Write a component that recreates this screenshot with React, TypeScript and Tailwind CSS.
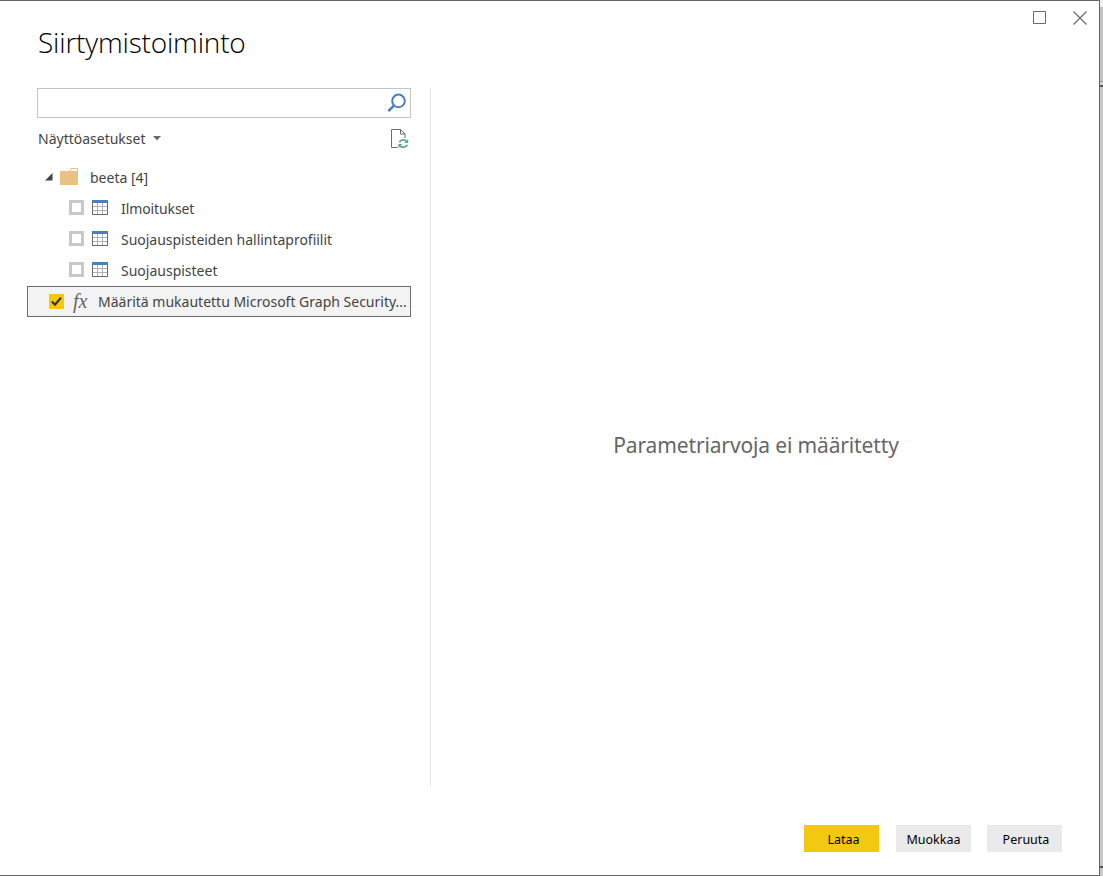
import React from "react";

function TableIcon() {
  return (
    <svg width="16" height="15" viewBox="0 0 16 15" shapeRendering="crispEdges" className="shrink-0">
      <rect x="0" y="0" width="16" height="15" fill="#6b6b6b" />
      <rect x="1" y="3" width="14" height="11" fill="#fff" />
      <path d="M5 3h1v11H5zM10 3h1v11h-1zM1 6h14v1H1zM1 10h14v1H1z" fill="#b0b0b0" />
      <rect x="0" y="0" width="16" height="3" fill="#4780bb" />
    </svg>
  );
}

function TableRow({ label, spacing }: { label: string; spacing: string }) {
  return (
    <div className="flex h-[31px] items-center pl-[42px]">
      <span className="-mt-[2px] size-[15px] shrink-0 border-3 border-[#c8c8c8] bg-white" />
      <span className="-mt-[2px] ml-2 flex">
        <TableIcon />
      </span>
      <span className={`ml-[13px] whitespace-nowrap ${spacing}`}>{label}</span>
    </div>
  );
}

function SearchIcon() {
  return (
    <svg width="20" height="20" viewBox="0 0 20 20" fill="none" stroke="#4a7ebb">
      <circle cx="11.5" cy="7.900" r="6.300" strokeWidth="2" />
      <path d="M7.200 12.300L1.300 18.200" strokeWidth="2.600" />
    </svg>
  );
}

function RefreshPageIcon() {
  return (
    <svg width="18" height="20" viewBox="0 0 18 20" fill="none">
      <path d="M6.500 18.500h-6V.5h9l4.500 4.500v4M9.500 .5v4.500H14" stroke="#6b6b6b" />
      <g stroke="#62a78b" strokeWidth="1.800">
        <path d="M8.300 13.300a4.300 3.900 0 0 1 7.500-.8" />
        <path d="M16.300 15.800a4.300 3.900 0 0 1-7.500 .8" />
      </g>
      <path d="M17.200 10v4h-4zM7.300 19v-4h4z" fill="#62a78b" />
    </svg>
  );
}

function Action({ label, className }: { label: string; className: string }) {
  return (
    <button className={`flex h-[27px] w-[75px] items-center justify-center pt-[3px] text-[12.500px] text-black ${className}`}>
      {label}
    </button>
  );
}

export default function App() {
  return (
    <div className="flex h-[876px] w-[1103px] overflow-hidden bg-white font-['Noto_Sans','Open_Sans',sans-serif] text-[14px] text-[#444]">
      <div className="flex w-[1100px] shrink-0 flex-col border-t border-r border-b border-[#666]">
        <header className="flex h-[87px] shrink-0 items-start justify-between pr-[12px] pl-[38px]">
          <h1 className="pt-[21px] font-['Open_Sans','Noto_Sans',sans-serif] text-[28px] leading-[40px] font-light tracking-[-0.180px] text-black">
            Siirtymistoiminto
          </h1>
          <div className="flex items-center gap-[26px] pt-[10px]">
            <svg width="14" height="14" viewBox="0 0 14 14" fill="none" stroke="#6b6b6b">
              <path d="M.5 .5h12v12H.5z" />
            </svg>
            <svg width="14" height="14" viewBox="0 0 14 14" fill="none" stroke="#666" strokeWidth="1.100">
              <path d="M.5 .5l13 13M13.500 .5l-13 13" />
            </svg>
          </div>
        </header>

        <main className="flex h-[699px] shrink-0">
          <aside className="flex w-[431px] shrink-0 flex-col border-r border-[#e5e5e5] pr-[19px] pl-[27px]">
            <div className="ml-[10px] flex h-[30px] w-[374px] items-center justify-end border border-[#c3c3c3] pr-[3px]">
              <SearchIcon />
            </div>
            <div className="flex h-[41px] items-center pr-[2px] pl-[11px]">
              <span className="-mt-px">Näyttöasetukset</span>
              <svg width="8" height="5" viewBox="0 0 8 5" className="ml-[7px]">
                <path d="M0 0h8L4 4.500z" fill="#6b6b6b" />
              </svg>
              <span className="ml-auto">
                <RefreshPageIcon />
              </span>
            </div>
            <div className="mt-[3px] flex h-[31px] items-center pl-[18px]">
              <svg width="8" height="8" viewBox="0 0 8 8" className="-mt-[2px]">
                <path d="M7.500 0v7.500H0z" fill="#444" />
              </svg>
              <svg width="18" height="17" viewBox="0 0 18 17" className="-mt-[2px] ml-[7px]">
                <path d="M0 3h9l2-3h7v17H0z" fill="#e9c283" />
                <path d="M11.500 1h5.500v2H10.200z" fill="#fff" />
              </svg>
              <span className="ml-3">beeta [4]</span>
            </div>
            <TableRow label="Ilmoitukset" spacing="tracking-[-0.100px]" />
            <TableRow label="Suojauspisteiden hallintaprofiilit" spacing="tracking-[-0.020px]" />
            <TableRow label="Suojauspisteet" spacing="tracking-normal" />
            <div className="flex h-[31px] w-[384px] items-center border border-[#6b6b6b] bg-[#f3f3f3] pl-[21px]">
              <svg width="15" height="15" viewBox="0 0 15 15" className="shrink-0">
                <path d="M0 0h15v15H0z" fill="#f2c811" />
                <path d="M2.800 7.500l3.200 3.200 6-7" fill="none" stroke="#333" strokeWidth="2.200" />
              </svg>
              <span className="-mt-[2px] ml-[9px] w-[25px] shrink-0 font-['Liberation_Serif',serif] text-[20px] leading-none text-[#666] italic">
                fx
              </span>
              <span className="whitespace-nowrap">Määritä mukautettu Microsoft Graph Security...</span>
            </div>
          </aside>
          <section className="flex flex-1 items-center justify-center pt-[16px] pr-[18px] text-[21px] tracking-[-0.140px] text-[#666]">
            <p className="whitespace-nowrap">Parametriarvoja ei määritetty</p>
          </section>
        </main>

        <footer className="flex justify-end pt-[38px] pr-[37px]">
          <Action label="Lataa" className="mr-[17px] bg-[#f2c811] pl-[4px]" />
          <Action label="Muokkaa" className="mr-4 bg-[#eaeaea]" />
          <Action label="Peruuta" className="bg-[#eaeaea] pl-[3px]" />
        </footer>
      </div>

      <div className="flex w-[3px] shrink-0 flex-col bg-[#c8c8c8]">
        <div className="h-[7px] bg-[#f0f0f0]" />
        <div className="h-[74px] bg-[#c3c3c3]" />
        <div className="h-px bg-[#999]" />
        <div className="h-[3px] bg-[#d0d0d0]" />
        <div className="h-[2px] bg-[#555]" />
        <div className="flex-1 bg-[#c8c8c8]" />
        <div className="h-[2px] bg-[#555]" />
        <div className="h-[8px] bg-[#c8c8c8]" />
      </div>
    </div>
  );
}
